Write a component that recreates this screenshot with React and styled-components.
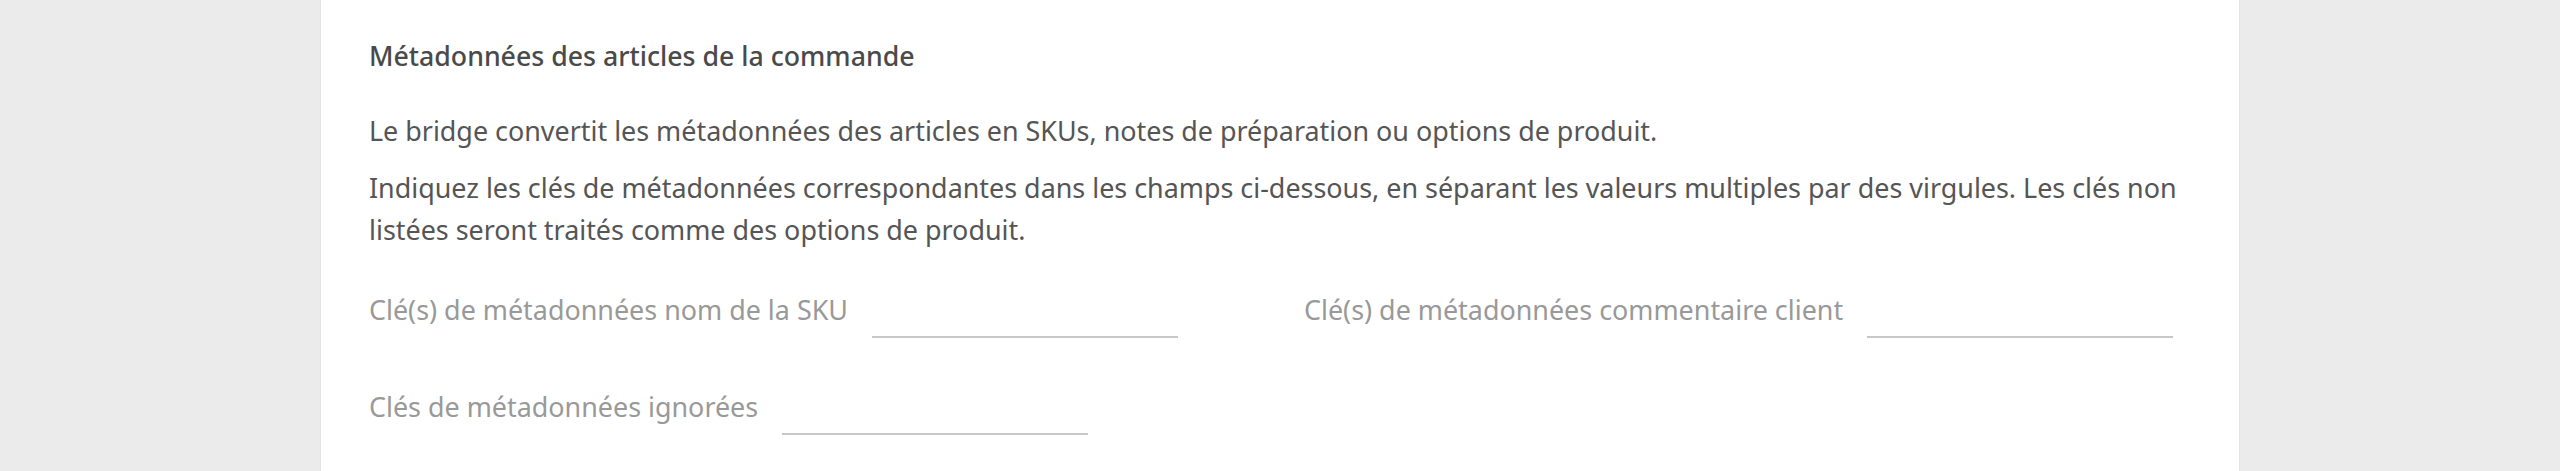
import React from 'react';
import styled, { createGlobalStyle } from 'styled-components';

const GlobalStyle = createGlobalStyle`
  html, body {
    margin: 0;
    background: #ebebeb;
  }
  body {
    font-family: "Noto Sans", "Open Sans", sans-serif;
    -webkit-font-smoothing: antialiased;
  }
`;

const Page = styled.main`
  width: 1920px;
  min-height: 100vh;
  margin: 0 auto;
  box-sizing: border-box;
  padding: 35px 48px 40px;
  background: #fff;
  border-left: 1px solid #e4e4e4;
  border-right: 1px solid #e4e4e4;
`;

const Title = styled.h3`
  margin: 0 0 33px;
  font-size: 26.7px;
  line-height: 41.6px;
  font-weight: 500;
  color: #4a4a4a;
`;

const Text = styled.p`
  margin: 0 0 16px;
  font-size: 26.9px;
  line-height: 41.6px;
  color: #555;

  &:last-of-type {
    margin-bottom: 0;
  }
`;

const Fields = styled.div`
  display: grid;
  grid-template-columns: 1fr 1fr;
  column-gap: 48px;
  row-gap: 48px;
  margin-top: 39px;
`;

const Field = styled.label`
  display: flex;
  align-items: flex-end;
  gap: 24px;
`;

const Label = styled.span`
  padding-bottom: 7px;
  font-size: 26.9px;
  line-height: 41.6px;
  color: #999;
  white-space: nowrap;
`;

const Input = styled.input`
  width: 306px;
  height: 48px;
  box-sizing: border-box;
  padding: 0 4px;
  border: none;
  border-bottom: 2px solid #c8c8c8;
  outline: none;
  background: transparent;
  font: inherit;
  font-size: 26.9px;
  color: #555;
`;

const fields = [
  'Clé(s) de métadonnées nom de la SKU',
  'Clé(s) de métadonnées commentaire client',
  'Clés de métadonnées ignorées',
];

export default function App() {
  return (
    <>
      <GlobalStyle />
      <Page>
        <Title>Métadonnées des articles de la commande</Title>
        <Text>
          Le bridge convertit les métadonnées des articles en SKUs, notes de préparation ou options de produit.
        </Text>
        <Text>
          Indiquez les clés de métadonnées correspondantes dans les champs ci-dessous, en séparant les valeurs
          multiples par des virgules. Les clés non listées seront traités comme des options de produit.
        </Text>
        <Fields>
          {fields.map((label) => (
            <Field key={label}>
              <Label>{label}</Label>
              <Input type="text" />
            </Field>
          ))}
        </Fields>
      </Page>
    </>
  );
}
